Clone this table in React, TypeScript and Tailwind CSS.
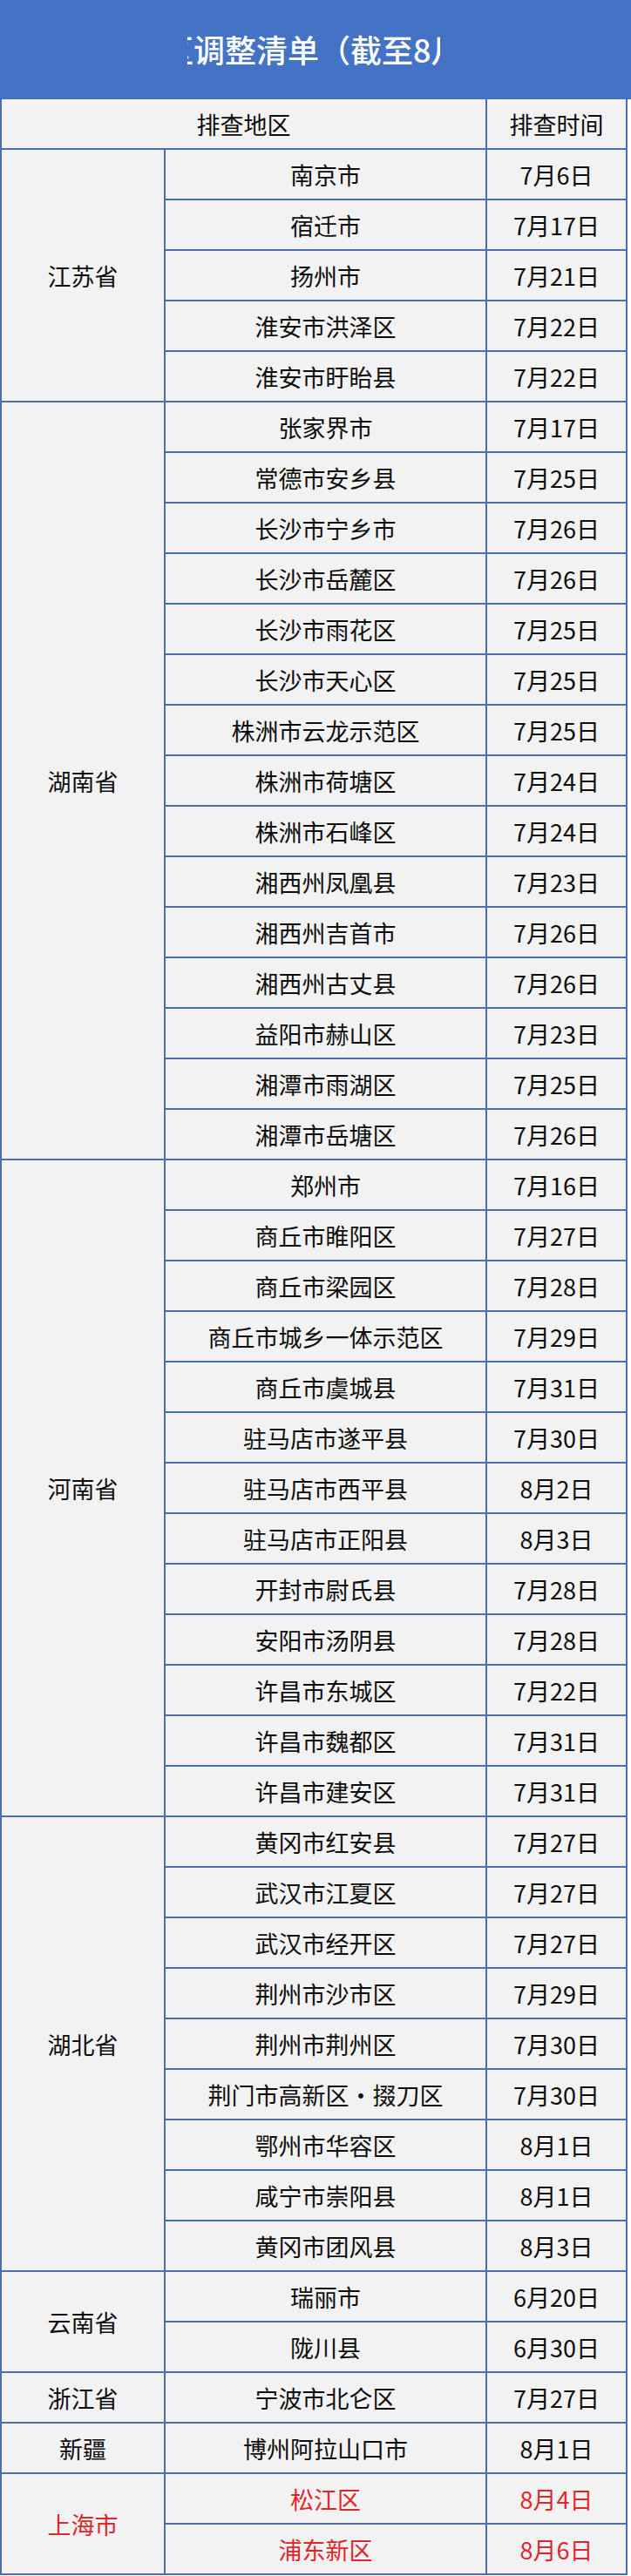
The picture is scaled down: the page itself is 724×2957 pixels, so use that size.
import React from "react";

type Group = { province: string; span: string; red?: boolean; rows: [string, string][] };

const groups: Group[] = [
  {
    province: "江苏省",
    span: "row-[span_5/span_5]",
    rows: [
      ["南京市", "7月6日"],
      ["宿迁市", "7月17日"],
      ["扬州市", "7月21日"],
      ["淮安市洪泽区", "7月22日"],
      ["淮安市盱眙县", "7月22日"],
    ],
  },
  {
    province: "湖南省",
    span: "row-[span_15/span_15]",
    rows: [
      ["张家界市", "7月17日"],
      ["常德市安乡县", "7月25日"],
      ["长沙市宁乡市", "7月26日"],
      ["长沙市岳麓区", "7月26日"],
      ["长沙市雨花区", "7月25日"],
      ["长沙市天心区", "7月25日"],
      ["株洲市云龙示范区", "7月25日"],
      ["株洲市荷塘区", "7月24日"],
      ["株洲市石峰区", "7月24日"],
      ["湘西州凤凰县", "7月23日"],
      ["湘西州吉首市", "7月26日"],
      ["湘西州古丈县", "7月26日"],
      ["益阳市赫山区", "7月23日"],
      ["湘潭市雨湖区", "7月25日"],
      ["湘潭市岳塘区", "7月26日"],
    ],
  },
  {
    province: "河南省",
    span: "row-[span_13/span_13]",
    rows: [
      ["郑州市", "7月16日"],
      ["商丘市睢阳区", "7月27日"],
      ["商丘市梁园区", "7月28日"],
      ["商丘市城乡一体示范区", "7月29日"],
      ["商丘市虞城县", "7月31日"],
      ["驻马店市遂平县", "7月30日"],
      ["驻马店市西平县", "8月2日"],
      ["驻马店市正阳县", "8月3日"],
      ["开封市尉氏县", "7月28日"],
      ["安阳市汤阴县", "7月28日"],
      ["许昌市东城区", "7月22日"],
      ["许昌市魏都区", "7月31日"],
      ["许昌市建安区", "7月31日"],
    ],
  },
  {
    province: "湖北省",
    span: "row-[span_9/span_9]",
    rows: [
      ["黄冈市红安县", "7月27日"],
      ["武汉市江夏区", "7月27日"],
      ["武汉市经开区", "7月27日"],
      ["荆州市沙市区", "7月29日"],
      ["荆州市荆州区", "7月30日"],
      ["荆门市高新区·掇刀区", "7月30日"],
      ["鄂州市华容区", "8月1日"],
      ["咸宁市崇阳县", "8月1日"],
      ["黄冈市团风县", "8月3日"],
    ],
  },
  {
    province: "云南省",
    span: "row-[span_2/span_2]",
    rows: [
      ["瑞丽市", "6月20日"],
      ["陇川县", "6月30日"],
    ],
  },
  { province: "浙江省", span: "row-[span_1/span_1]", rows: [["宁波市北仑区", "7月27日"]] },
  { province: "新疆", span: "row-[span_1/span_1]", rows: [["博州阿拉山口市", "8月1日"]] },
  {
    province: "上海市",
    span: "row-[span_2/span_2]",
    red: true,
    rows: [
      ["松江区", "8月4日"],
      ["浦东新区", "8月6日"],
    ],
  },
];

const font = { fontFamily: '"Noto Sans CJK SC", "Noto Sans", sans-serif' };

export default function App() {
  return (
    <div className="w-[724px] h-[2957px] bg-white text-[#0d0d0d]" style={font}>
      <div className="h-[114px] bg-[#4472c4] flex items-center pl-[215px]">
        <div className="w-[290px] overflow-hidden whitespace-nowrap text-white text-[36px] leading-none font-medium pb-[2px]">
          <span className="inline-block -ml-[29px]">区调整清单（截至8月）</span>
        </div>
      </div>
      <div className="w-[720px] bg-[#4b6fae] px-[2px] pb-[2px] grid grid-cols-[186px_367px_159px] auto-rows-[56px] gap-[2px] text-[27px] leading-none">
        <div className="col-span-2 bg-[#f2f2f2] flex items-center justify-center">排查地区</div>
        <div className="bg-[#f2f2f2] flex items-center justify-center">排查时间</div>
        {groups.map((g) => (
          <React.Fragment key={g.province}>
            <div
              className={`${g.span} bg-[#f2f2f2] flex items-center justify-center ${g.red ? "text-[#e0262b]" : ""}`}
            >
              {g.province}
            </div>
            {g.rows.map(([d, t]) => (
              <React.Fragment key={d}>
                <div className={`bg-[#f2f2f2] flex items-center justify-center ${g.red ? "text-[#e0262b]" : ""}`}>
                  {d}
                </div>
                <div className={`bg-[#f2f2f2] flex items-center justify-center ${g.red ? "text-[#e0262b]" : ""}`}>
                  {t}
                </div>
              </React.Fragment>
            ))}
          </React.Fragment>
        ))}
      </div>
    </div>
  );
}
